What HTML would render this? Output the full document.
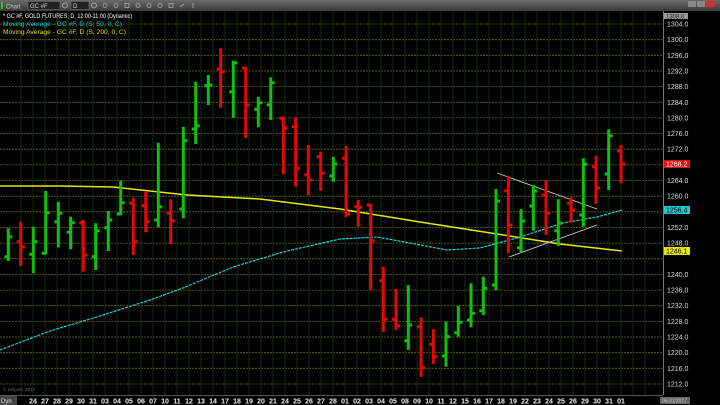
<!DOCTYPE html>
<html><head><meta charset="utf-8"><style>
html,body{margin:0;padding:0;background:#000;width:720px;height:405px;overflow:hidden}
svg{display:block}
text{font-family:"Liberation Sans",sans-serif}
</style></head><body>
<svg width="720" height="405" viewBox="0 0 720 405" xmlns="http://www.w3.org/2000/svg">
<defs><linearGradient id="tb" x1="0" y1="0" x2="0" y2="1"><stop offset="0" stop-color="#6a6a6a"/><stop offset="1" stop-color="#3a3a3a"/></linearGradient></defs>
<rect x="0" y="0" width="720" height="405" fill="#000"/>
<rect x="0" y="0" width="720" height="11" fill="url(#tb)"/>
<rect x="1" y="2" width="2" height="7" fill="#2c2"/>
<text x="6" y="8.5" font-size="6" fill="#ccc">Chart</text>
<rect x="28" y="1.5" width="32" height="8" fill="#222" stroke="#777" stroke-width="0.5"/>
<text x="30" y="8" font-size="6" fill="#ddd">GC #F</text>
<circle cx="65" cy="5.5" r="2.5" fill="none" stroke="#bbb" stroke-width="0.8"/>
<rect x="71" y="1.5" width="18" height="8" fill="#222" stroke="#777" stroke-width="0.5"/>
<text x="73" y="8" font-size="6" fill="#ddd">D</text>
<circle cx="94" cy="5.5" r="2.5" fill="none" stroke="#bbb" stroke-width="0.8"/>
<g fill="none" stroke="#aaa" stroke-width="0.8">
<circle cx="105" cy="5.5" r="2"/><circle cx="116" cy="5.5" r="2"/><rect x="125" y="3.5" width="4" height="4"/><circle cx="138" cy="5.5" r="2"/><circle cx="149" cy="5.5" r="2"/><circle cx="160" cy="5.5" r="2"/><rect x="169" y="3.5" width="4" height="4"/><path d="M180 7 L184 4"/><path d="M193 3 V8"/>
</g>
<rect x="688" y="1" width="8" height="6" fill="#888"/><rect x="697" y="1" width="8" height="6" fill="#888"/><rect x="706" y="1" width="9" height="6" fill="#c33"/>
<g stroke="#6b6b10" stroke-width="0.8" stroke-dasharray="2,1">
<line x1="0" x2="663" y1="24" y2="24"/><line x1="0" x2="663" y1="39.7" y2="39.7"/><line x1="0" x2="663" y1="55.3" y2="55.3"/><line x1="0" x2="663" y1="71" y2="71"/><line x1="0" x2="663" y1="86.6" y2="86.6"/><line x1="0" x2="663" y1="102.3" y2="102.3"/><line x1="0" x2="663" y1="117.9" y2="117.9"/><line x1="0" x2="663" y1="133.6" y2="133.6"/><line x1="0" x2="663" y1="149.2" y2="149.2"/><line x1="0" x2="663" y1="164.9" y2="164.9"/><line x1="0" x2="663" y1="180.5" y2="180.5"/><line x1="0" x2="663" y1="196.2" y2="196.2"/><line x1="0" x2="663" y1="211.8" y2="211.8"/><line x1="0" x2="663" y1="227.5" y2="227.5"/><line x1="0" x2="663" y1="243.1" y2="243.1"/><line x1="0" x2="663" y1="258.8" y2="258.8"/><line x1="0" x2="663" y1="274.4" y2="274.4"/><line x1="0" x2="663" y1="290.1" y2="290.1"/><line x1="0" x2="663" y1="305.7" y2="305.7"/><line x1="0" x2="663" y1="321.4" y2="321.4"/><line x1="0" x2="663" y1="337" y2="337"/><line x1="0" x2="663" y1="352.7" y2="352.7"/><line x1="0" x2="663" y1="368.3" y2="368.3"/><line x1="0" x2="663" y1="384" y2="384"/>
</g>
<g stroke="#0e3a0e" stroke-width="0.8">
<path d="M21 11V395M33 11V395M45 11V395M57 11V395M69 11V395M81 11V395M93 11V395M105 11V395M117 11V395M129 11V395M141 11V395M153 11V395M165 11V395M177 11V395M189 11V395M201 11V395M213 11V395M225 11V395M237 11V395M249 11V395M261 11V395M273 11V395M285 11V395M297 11V395M309 11V395M321 11V395M333 11V395M345 11V395M357 11V395M369 11V395M381 11V395M393 11V395M405 11V395M417 11V395M429 11V395M441 11V395M453 11V395M465 11V395M477 11V395M489 11V395M501 11V395M513 11V395M525 11V395M537 11V395M549 11V395M561 11V395M573 11V395M585 11V395M597 11V395M609 11V395M621 11V395M633 11V395M645 11V395"/>
</g>
<text x="3" y="18" font-size="6.5" fill="#fff" textLength="129" lengthAdjust="spacingAndGlyphs">* GC #F, GOLD FUTURES, D, 12:00-11:00 (Dynamic)</text>
<text x="3" y="26" font-size="6.5" fill="#1cc" textLength="119" lengthAdjust="spacingAndGlyphs">Moving Average - GC #F, D (S, 50, 0, C)</text>
<text x="3" y="34" font-size="6.5" fill="#dd0" textLength="123" lengthAdjust="spacingAndGlyphs">Moving Average - GC #F, D (S, 200, 0, C)</text>
<polyline fill="none" stroke="#e8e800" stroke-width="1.5" points="0,186 60,186 113,187 187,195 260,199 340,209 420,222 497,234 560,244 622,251"/>
<polyline fill="none" stroke="#1ad0d8" stroke-width="1.2" stroke-dasharray="3,1" points="0,350 50,331 100,316 150,300 183,288 233,267 283,252 340,239 377,237 410,243 447,250 480,248 517,238 563,223 597,217 622,210"/>
<g stroke="#ccc" stroke-width="0.9"><line x1="497" y1="173" x2="597" y2="209"/><line x1="509" y1="257" x2="597" y2="225"/></g>
<g stroke-width="3" fill="none">
<g stroke="#10c010">
<path d="M8.3 228.3V261M4.3 256.7H8.3M8.3 236.7H12.3"/>
<path d="M33.3 226.7V273.3M29.3 254.3H33.3M33.3 241.7H37.3"/>
<path d="M45.7 191V254.3M41.7 253.3H45.7M45.7 212.7H49.7"/>
<path d="M58.3 201.7V247.3M54.3 221.7H58.3M58.3 213.3H62.3"/>
<path d="M70.7 216.7V249.3M66.7 232.3H70.7M70.7 222.7H74.7"/>
<path d="M95.7 223.3V270M91.7 256.7H95.7M95.7 230.7H99.7"/>
<path d="M108.3 211V251M104.3 227.7H108.3M108.3 220H112.3"/>
<path d="M120.7 180.7V215M116.7 214H120.7M120.7 202.7H124.7"/>
<path d="M158.3 142.7V227.3M154.3 220H158.3M158.3 206.7H162.3"/>
<path d="M183.3 126.7V218.3M179.3 209H183.3M183.3 140.7H187.3"/>
<path d="M195.7 81.7V144M191.7 129H195.7M195.7 125.7H199.7"/>
<path d="M208.3 75V105M204.3 85.7H208.3M208.3 85H212.3"/>
<path d="M233.3 60.7V117.7M229.3 91.7H233.3M233.3 62.7H237.3"/>
<path d="M258.3 96.7V127.3M254.3 109.3H258.3M258.3 102.7H262.3"/>
<path d="M270.7 77.3V120M266.7 105H270.7M270.7 82.7H274.7"/>
<path d="M333.3 156.7V181.7M329.3 176H333.3M333.3 164H337.3"/>
<path d="M408.3 285V350M404.3 340.7H408.3M408.3 325H412.3"/>
<path d="M446 321.7V366.7M442 356H446M446 336.7H450"/>
<path d="M458.3 306V336.7M454.3 332.7H458.3M458.3 322.3H462.3"/>
<path d="M471 283.3V327.3M467 320H471M471 313.3H475"/>
<path d="M483.3 276.7V315M479.3 310.7H483.3M483.3 288.3H487.3"/>
<path d="M496 189V290M492 285H496M496 201H500"/>
<path d="M521 209V252.3M517 247.7H521M521 221H525"/>
<path d="M533.3 185V230.7M529.3 206H533.3M533.3 191H537.3"/>
<path d="M558.3 199.3V246M554.3 230.7H558.3M558.3 223.3H562.3"/>
<path d="M583.3 158.3V226.7M579.3 215H583.3M583.3 164.3H587.3"/>
<path d="M608.7 129.3V190M604.7 174H608.7M608.7 135.7H612.7"/>
</g>
<g stroke="#e00808">
<path d="M20.7 221.7V266M16.7 241.7H20.7M20.7 246.7H24.7"/>
<path d="M83.3 220V271.7M79.3 222.7H83.3M83.3 255H87.3"/>
<path d="M133.3 197.7V255M129.3 203.3H133.3M133.3 241.7H137.3"/>
<path d="M145.7 191.7V232.3M141.7 205.7H145.7M145.7 221.7H149.7"/>
<path d="M170.7 199.3V244M166.7 213.3H170.7M170.7 220.7H174.7"/>
<path d="M220.7 48.3V107.7M216.7 69.3H220.7M220.7 71.7H224.7"/>
<path d="M245.7 66.7V137.7M241.7 68.3H245.7M245.7 105H249.7"/>
<path d="M283.3 116.7V174.3M279.3 118.3H283.3M283.3 128.3H287.3"/>
<path d="M295.7 117.3V186.7M291.7 126.7H295.7M295.7 168.3H299.7"/>
<path d="M308.3 145V195M304.3 175H308.3M308.3 180H312.3"/>
<path d="M320.7 151.7V191M316.7 156.7H320.7M320.7 173.3H324.7"/>
<path d="M346 146V217.3M342 158.3H346M346 214H350"/>
<path d="M358.3 200V226.7M354.3 206.7H358.3M358.3 207.3H362.3"/>
<path d="M370.7 204V290M366.7 205H370.7M370.7 241H374.7"/>
<path d="M383.3 266.7V331.7M379.3 280.7H383.3M383.3 319.3H387.3"/>
<path d="M396 289V330M392 319.3H396M396 325.7H400"/>
<path d="M421 317.3V376.7M417 326.7H421M421 367.7H425"/>
<path d="M433.3 329V364M429.3 344.3H433.3M433.3 356.7H437.3"/>
<path d="M508.3 175.7V253.3M504.3 190.7H508.3M508.3 225H512.3"/>
<path d="M546 180V235M542 195H546M546 213.3H550"/>
<path d="M571 197.3V222.7M567 203.3H571M571 210H575"/>
<path d="M596 155.7V204.3M592 166.7H596M596 188.3H600"/>
<path d="M621 145V183.3M617 151H621M621 164.3H625"/>
</g>
</g>
<rect x="663" y="11" width="57" height="394" fill="#000"/>
<line x1="663.5" y1="11" x2="663.5" y2="395" stroke="#777" stroke-width="1"/>
<g font-size="7" fill="#ddd">
<text x="667" y="26.5">1304.0</text><text x="667" y="42.2">1300.0</text><text x="667" y="57.8">1296.0</text><text x="667" y="73.5">1292.0</text><text x="667" y="89.1">1288.0</text><text x="667" y="104.8">1284.0</text><text x="667" y="120.4">1280.0</text><text x="667" y="136.1">1276.0</text><text x="667" y="151.7">1272.0</text><text x="667" y="183">1264.0</text><text x="667" y="198.7">1260.0</text><text x="667" y="230">1252.0</text><text x="667" y="245.6">1248.0</text><text x="667" y="277">1240.0</text><text x="667" y="292.6">1236.0</text><text x="667" y="308.2">1232.0</text><text x="667" y="323.9">1228.0</text><text x="667" y="339.5">1224.0</text><text x="667" y="355.2">1220.0</text><text x="667" y="370.8">1216.0</text><text x="667" y="386.5">1212.0</text>
</g>
<rect x="664" y="13" width="24" height="6" fill="#999"/><text x="666" y="18.5" font-size="6" fill="#222">1308.0</text>
<rect x="664" y="160" width="26" height="8" fill="#e01010"/><text x="666" y="166.5" font-size="7" fill="#fff">1268.2</text>
<rect x="664" y="206" width="26" height="8" fill="#20c8d0"/><text x="666" y="212.5" font-size="7" fill="#000">1256.4</text>
<rect x="664" y="247" width="26" height="8" fill="#e8e800"/><text x="666" y="253.5" font-size="7" fill="#000">1246.1</text>
<rect x="0" y="395" width="720" height="10" fill="#000"/>
<line x1="0" y1="395.5" x2="663" y2="395.5" stroke="#555"/>
<text x="3" y="391" font-size="4.5" fill="#666">© eSignal, 2017</text>
<rect x="0" y="396" width="17" height="9" fill="#444"/><text x="1" y="403" font-size="6" fill="#ddd">Dyn</text>
<g font-size="7" font-weight="bold" fill="#eee" text-anchor="middle">
<text x="33" y="403.5">24</text><text x="45" y="403.5">27</text><text x="57" y="403.5">28</text><text x="69" y="403.5">29</text><text x="81" y="403.5">30</text><text x="93" y="403.5">31</text><text x="105" y="403.5">03</text><text x="117" y="403.5">04</text><text x="129" y="403.5">05</text><text x="141" y="403.5">06</text><text x="153" y="403.5">07</text><text x="165" y="403.5">10</text><text x="177" y="403.5">11</text><text x="189" y="403.5">12</text><text x="201" y="403.5">13</text><text x="213" y="403.5">14</text><text x="225" y="403.5">17</text><text x="237" y="403.5">18</text><text x="249" y="403.5">19</text><text x="261" y="403.5">20</text><text x="273" y="403.5">21</text><text x="285" y="403.5">24</text><text x="297" y="403.5">25</text><text x="309" y="403.5">26</text><text x="321" y="403.5">27</text><text x="333" y="403.5">28</text><text x="345" y="403.5">01</text><text x="357" y="403.5">02</text><text x="369" y="403.5">03</text><text x="381" y="403.5">04</text><text x="393" y="403.5">05</text><text x="405" y="403.5">08</text><text x="417" y="403.5">09</text><text x="429" y="403.5">10</text><text x="441" y="403.5">11</text><text x="453" y="403.5">12</text><text x="465" y="403.5">15</text><text x="477" y="403.5">16</text><text x="489" y="403.5">17</text><text x="501" y="403.5">18</text><text x="513" y="403.5">19</text><text x="525" y="403.5">22</text><text x="537" y="403.5">23</text><text x="549" y="403.5">24</text><text x="561" y="403.5">25</text><text x="573" y="403.5">26</text><text x="585" y="403.5">29</text><text x="597" y="403.5">30</text><text x="609" y="403.5">31</text><text x="621" y="403.5">01</text>
</g>
<rect x="660" y="397" width="30" height="7" fill="#666"/><text x="662" y="402.5" font-size="5" fill="#ccc">05/31/2017</text>
</svg>
</body></html>
